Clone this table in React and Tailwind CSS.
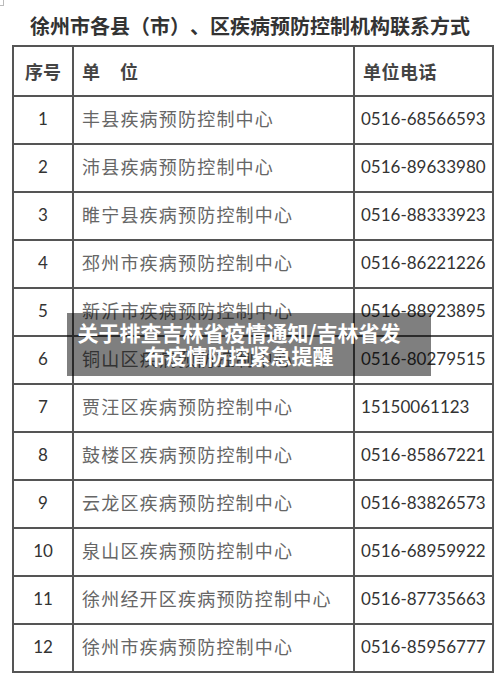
const rows = [
  ["1", "丰县疾病预防控制中心", "0516-68566593"],
  ["2", "沛县疾病预防控制中心", "0516-89633980"],
  ["3", "睢宁县疾病预防控制中心", "0516-88333923"],
  ["4", "邳州市疾病预防控制中心", "0516-86221226"],
  ["5", "新沂市疾病预防控制中心", "0516-88923895"],
  ["6", "铜山区疾病预防控制中心", "0516-80279515"],
  ["7", "贾汪区疾病预防控制中心", "15150061123"],
  ["8", "鼓楼区疾病预防控制中心", "0516-85867221"],
  ["9", "云龙区疾病预防控制中心", "0516-83826573"],
  ["10", "泉山区疾病预防控制中心", "0516-68959922"],
  ["11", "徐州经开区疾病预防控制中心", "0516-87735663"],
  ["12", "徐州市疾病预防控制中心", "0516-85956777"],
];

const cjk = "font-['Noto_Sans_CJK_SC',sans-serif]";
const num = "font-['Lato','Noto_Sans_CJK_SC',sans-serif]";

export default function App() {
  return (
    <div className={`relative h-[690px] w-[500px] overflow-hidden bg-white ${cjk}`}>
      {/* scan corner mark */}
      <div className="absolute left-0 top-0 h-[6px] w-[4px] border-b border-r border-[#bbb]" />

      <h1 className="pt-[13px] text-center text-[20px] font-bold leading-[26px] text-[#333] [text-spacing-trim:space-all]">
        徐州市各县（市）、区疾病预防控制机构联系方式
      </h1>

      <table className="ml-[12px] mt-[6px] w-[480px] table-fixed border-collapse border-2 border-[#555]">
        <colgroup>
          <col className="w-[60px]" />
          <col className="w-[281px]" />
          <col className="w-[139px]" />
        </colgroup>
        <thead>
          <tr className="h-[50px]">
            <th className="border-2 border-[#555] text-center text-[18px] font-bold text-[#444]">
              序号
            </th>
            <th className="border-2 border-[#555] pl-[8px] text-left text-[18px] font-bold text-[#444]">
              单<span className="ml-[20px]">位</span>
            </th>
            <th className="border-2 border-[#555] pl-[8px] text-left text-[18px] font-bold tracking-[0.5px] text-[#444]">
              单位电话
            </th>
          </tr>
        </thead>
        <tbody>
          {rows.map(([n, name, phone]) => (
            <tr key={n} className="h-[48px]">
              <td className={`border-2 border-[#555] pb-[3px] text-center text-[17px] text-[#333] ${num}`}>
                {n}
              </td>
              <td className="border-2 border-[#555] pb-[3px] pl-[8px] text-[18px] tracking-[1.2px] text-[#666]">
                {name}
              </td>
              <td className={`border-2 border-[#555] pb-[3px] pl-[6px] text-[17px] text-[#333] ${num}`}>
                {phone}
              </td>
            </tr>
          ))}
        </tbody>
      </table>

      {/* caption overlay */}
      <div className="absolute left-[67px] top-[313px] h-[63px] w-[364px] bg-black/50 py-[8px] pr-[20px] text-center text-[21px] font-bold leading-[23px] text-white">
        <p>关于排查吉林省疫情通知/吉林省发</p>
        <p>布疫情防控紧急提醒</p>
      </div>
    </div>
  );
}
